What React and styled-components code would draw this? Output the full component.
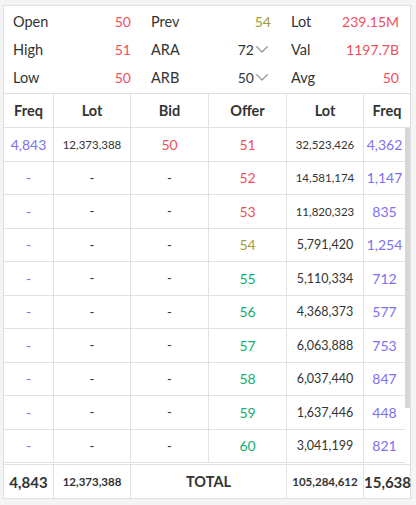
import React from 'react'
import styled, { createGlobalStyle } from 'styled-components'

const GlobalStyle = createGlobalStyle`
  html, body {
    margin: 0;
    background: #f4f4f4;
    font-family: 'Lato', 'Liberation Sans', sans-serif;
    color: #333;
  }
`

const COLS = '50px 77px 78px 78px 77px 1fr'

const colors = {
  red: '#f0505a',
  purple: '#7d70f2',
  green: '#17ad6d',
  olive: '#a39c3a',
  text: '#333',
}

const Panel = styled.div`
  margin: 5px 5px 0 3px;
  width: 408px;
  box-sizing: border-box;
  background: #fff;
  border: 1px solid #dedede;
  display: flex;
  flex-direction: column;
`

const Stats = styled.div`
  display: grid;
  grid-template-columns: 118px 120px 108px;
  column-gap: 20px;
  padding: 1px 0 2px 9px;
  border-bottom: 1px solid #dedede;
`

const StatRow = styled.div`
  height: 28px;
  display: flex;
  align-items: center;
  justify-content: space-between;
  font-size: 14px;
`

const Label = styled.span`
  color: #333;
  font-size: 14.5px;
`

const Value = styled.span`
  color: ${p => colors[p.tone] || colors.text};
  display: flex;
  align-items: center;
`

const Chevron = styled.svg`
  width: 14px;
  height: 14px;
  margin-left: 1px;
  margin-right: 2px;
`

const Row = styled.div`
  display: grid;
  grid-template-columns: ${COLS};
  height: ${p => p.h}px;
  border-bottom: 1px solid #e2e2e2;
  box-sizing: border-box;
`

const Cell = styled.div`
  display: flex;
  align-items: center;
  justify-content: center;
  white-space: nowrap;
  border-right: 1px solid #e2e2e2;
  font-size: ${p => p.size || 14}px;
  font-weight: ${p => (p.bold ? 700 : 400)};
  color: ${p => colors[p.tone] || colors.text};
  grid-column: ${p => p.span || 'auto'};
  &:last-child {
    border-right: none;
  }
`

const Body = styled.div`
  display: flex;
  height: 335px;
`

const Rows = styled.div`
  flex: 1;
  min-width: 0;
`

const Track = styled.div`
  width: 5px;
  flex-shrink: 0;
`

const Thumb = styled.div`
  height: 280px;
  background: #d6d6d6;
`

const BodyRow = styled(Row)`
  grid-template-columns: 50px 77px 78px 78px 77px 1fr;
  height: 33.5px;
`

const Footer = styled(Row)`
  margin-top: 1px;
  border-top: 1px solid #e2e2e2;
  border-bottom: none;
`

const stats = [
  [['Open', '50', 'red'], ['Prev', '54', 'olive'], ['Lot', '239.15M', 'red']],
  [['High', '51', 'red'], ['ARA', '72', 'text', true], ['Val', '1197.7B', 'red']],
  [['Low', '50', 'red'], ['ARB', '50', 'text', true], ['Avg', '50', 'red']],
]

const offers = [
  ['51', '32,523,426', '4,362', 'red'],
  ['52', '14,581,174', '1,147', 'red'],
  ['53', '11,820,323', '835', 'red'],
  ['54', '5,791,420', '1,254', 'olive'],
  ['55', '5,110,334', '712', 'green'],
  ['56', '4,368,373', '577', 'green'],
  ['57', '6,063,888', '753', 'green'],
  ['58', '6,037,440', '847', 'green'],
  ['59', '1,637,446', '448', 'green'],
  ['60', '3,041,199', '821', 'green'],
]

const lotSize = v => (v.length > 9 ? 11.5 : 12.5)

function Down() {
  return (
    <Chevron viewBox="0 0 24 24" fill="none" stroke="#9a9a9a" strokeWidth="2.4" strokeLinecap="round" strokeLinejoin="round">
      <polyline points="3 8 12 17 21 8" />
    </Chevron>
  )
}

export default function App() {
  return (
    <>
      <GlobalStyle />
      <Panel>
        <Stats>
          {[0, 1, 2].map(col => (
            <div key={col}>
              {stats.map((r, i) => {
                const [label, value, tone, drop] = r[col]
                return (
                  <StatRow key={i}>
                    <Label>{label}</Label>
                    <Value tone={tone}>{value}{drop && <Down />}</Value>
                  </StatRow>
                )
              })}
            </div>
          ))}
        </Stats>

        <Row h={34}>
          {['Freq', 'Lot', 'Bid', 'Offer', 'Lot', 'Freq'].map((h, i) => (
            <Cell key={i} bold size={14.5} tone="text">{h}</Cell>
          ))}
        </Row>

        <Body>
          <Rows>
            {offers.map(([price, lot, freq, tone], i) => (
              <BodyRow key={price}>
                <Cell tone="purple">{i === 0 ? '4,843' : '-'}</Cell>
                <Cell size={i === 0 ? 11.5 : 13}>{i === 0 ? '12,373,388' : '-'}</Cell>
                <Cell size={i === 0 ? 14 : 13} tone={i === 0 ? 'red' : 'text'}>{i === 0 ? '50' : '-'}</Cell>
                <Cell tone={tone}>{price}</Cell>
                <Cell size={lotSize(lot)}>{lot}</Cell>
                <Cell tone="purple">{freq}</Cell>
              </BodyRow>
            ))}
          </Rows>
          <Track>
            <Thumb />
          </Track>
        </Body>

        <Footer h={34}>
          <Cell bold size={15}>4,843</Cell>
          <Cell bold size={11.5}>12,373,388</Cell>
          <Cell bold size={14.5} span="span 2">TOTAL</Cell>
          <Cell bold size={11.5}>105,284,612</Cell>
          <Cell bold size={15}>15,638</Cell>
        </Footer>
      </Panel>
    </>
  )
}
